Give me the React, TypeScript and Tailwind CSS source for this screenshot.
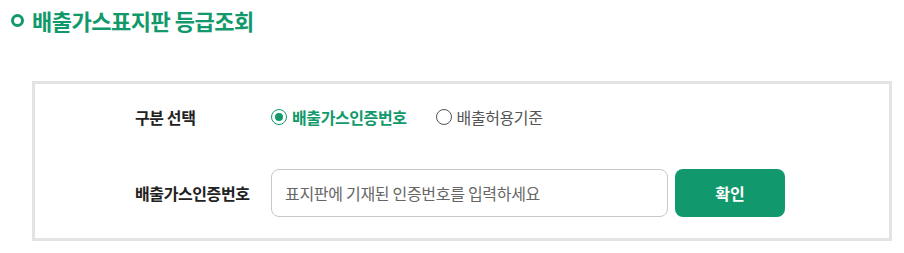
import React, { useState } from "react";

export default function App() {
  const [mode, setMode] = useState<"cert" | "std">("cert");
  const font = { fontFamily: '"Noto Sans CJK KR", "Noto Sans", sans-serif' };
  return (
    <div className="w-[904px] h-[253px] bg-white" style={font}>
      <div className="flex items-center pl-[11px] pt-[8px] h-[32px]">
        <span className="w-[13px] h-[13px] rounded-full border-[3px] border-[#12996b] mr-[8px]" />
        <h1 className="text-[22px] font-bold text-[#12996b] tracking-[-0.5px] leading-none">배출가스표지판 등급조회</h1>
      </div>
      <div className="ml-[32px] mt-[49px] w-[860px] border-[3px] border-[#e3e3e3] pt-[21px] pb-[21px] pl-[100px]">
        <div className="flex items-center h-[24px]">
          <div className="w-[136px] text-[16px] font-bold text-[#222] tracking-[-0.4px]">구분 선택</div>
          <label className="flex items-center cursor-pointer" onClick={() => setMode("cert")}>
            <span className={`w-[16px] h-[16px] rounded-full border-[1.5px] flex items-center justify-center ${mode === "cert" ? "border-[#12996b]" : "border-[#555]"}`}>
              {mode === "cert" && <span className="w-[8px] h-[8px] rounded-full bg-[#12996b]" />}
            </span>
            <span className={`ml-[5px] text-[16px] tracking-[-0.4px] ${mode === "cert" ? "font-bold text-[#12996b]" : "text-[#555]"}`}>배출가스인증번호</span>
          </label>
          <label className="flex items-center cursor-pointer ml-[29px]" onClick={() => setMode("std")}>
            <span className={`w-[16px] h-[16px] rounded-full border-[1.5px] flex items-center justify-center ${mode === "std" ? "border-[#12996b]" : "border-[#555]"}`}>
              {mode === "std" && <span className="w-[8px] h-[8px] rounded-full bg-[#12996b]" />}
            </span>
            <span className={`ml-[5px] text-[16px] tracking-[-0.4px] ${mode === "std" ? "font-bold text-[#12996b]" : "text-[#555]"}`}>배출허용기준</span>
          </label>
        </div>
        <div className="flex items-center mt-[40px] h-[48px]">
          <div className="w-[136px] text-[16px] font-bold text-[#222] tracking-[-0.4px]">배출가스인증번호</div>
          <input
            className="w-[397px] h-[48px] rounded-[8px] border border-[#c8c8c8] px-[13px] text-[16px] text-[#333] placeholder:text-[#666] outline-none tracking-[-0.3px]"
            placeholder="표지판에 기재된 인증번호를 입력하세요"
            style={font}
          />
          <button className="ml-[7px] w-[110px] h-[48px] rounded-[8px] bg-[#11996d] text-white text-[16px] font-bold">확인</button>
        </div>
      </div>
    </div>
  );
}
